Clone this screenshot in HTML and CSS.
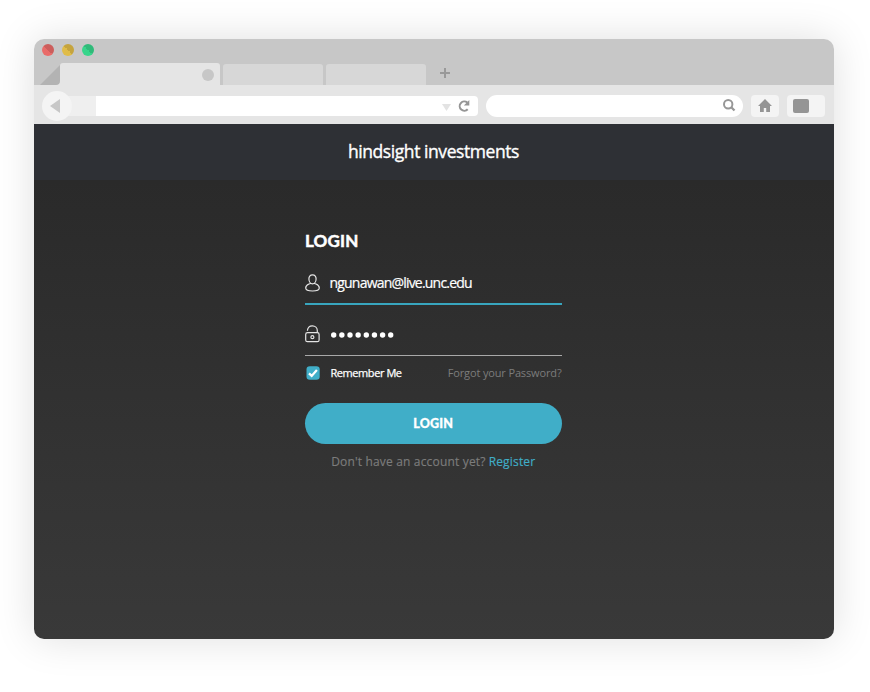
FILE: index.html
```html
<!DOCTYPE html>
<html lang="en">
<head>
<meta charset="utf-8">
<title>hindsight investments</title>
<link rel="stylesheet" href="styles.css">
</head>
<body>
<div class="window">
  <div class="titlebar">
    <div class="lights"><i class="red"></i><i class="yellow"></i><i class="green"></i></div>
    <div class="tabs">
      <svg class="fold" width="20" height="22" viewBox="0 0 20 22"><path d="M20 2V19Q20 22 17 22H0Z" fill="#b3b3b3"/><path d="M20 18V22H16Q20 22 20 18Z" fill="#e5e5e5"/></svg>
      <div class="tab active"><i class="tab-dot"></i></div>
      <div class="tab"></div>
      <div class="tab"></div>
      <svg class="plus" width="10" height="10" viewBox="0 0 10 10"><path d="M5 0V10M0 5H10" stroke="#999" stroke-width="2"/></svg>
    </div>
  </div>
  <div class="toolbar">
    <div class="back"><svg width="10" height="14" viewBox="0 0 10 14"><path d="M10 0V14L0 7Z" fill="#c7c7c7"/></svg></div>
    <div class="lead"></div>
    <div class="address">
      <svg width="9" height="7" viewBox="0 0 9 7"><path d="M0 0H9L4.500 7Z" fill="#e3e3e3"/></svg>
      <svg class="reload" width="12" height="12" viewBox="0 0 12 12"><path d="M9.300 2.600A4.600 4.600 0 1 0 9.700 9.200" fill="none" stroke="#959595" stroke-width="2"/><path d="M11.300 0V5.500H5.800Z" fill="#959595"/></svg>
    </div>
    <div class="search"><svg width="13" height="13" viewBox="0 0 13 13"><circle cx="5.200" cy="5.200" r="4.200" fill="none" stroke="#979797" stroke-width="2"/><path d="M8.300 8.300L11.500 11.500" stroke="#979797" stroke-width="2.300"/></svg></div>
    <div class="tool home"><svg width="14" height="13" viewBox="0 0 14 13"><path d="M7 0L14 7H12V13H8.200V9H5.800V13H2V7H0Z" fill="#959595"/></svg></div>
    <div class="tool menu"><i></i></div>
  </div>
  <header class="brand"><span>hindsight investments</span></header>
  <main>
    <form class="login">
      <h1>LOGIN</h1>
      <div class="field focus">
        <svg width="15" height="18" viewBox="0 0 15 18"><path d="M7.500 .8C5 .8 3.800 2.700 3.900 5C4 7.700 5.600 9.900 7.500 9.900S11 7.700 11.100 5C11.200 2.700 10 .8 7.500 .8ZM5.300 9.300C4.500 10.300 .7 10.400 .7 14C.7 16.200 3.400 17 7.500 17S14.300 16.200 14.300 14C14.300 10.400 10.500 10.300 9.700 9.300" fill="none" stroke="#e4e4e4" stroke-width="1.200"/></svg>
        <span class="email">ngunawan@live.unc.edu</span>
      </div>
      <div class="field password">
        <svg class="lock" width="15" height="18" viewBox="0 0 15 18"><rect x=".7" y="7.700" width="13.400" height="9" rx="1.800" fill="none" stroke="#e4e4e4" stroke-width="1.200"/><path d="M2.400 5.800C2.600 2.800 4.700.8 7.400.8S12.300 2.900 12.300 5.600V7.500" fill="none" stroke="#e4e4e4" stroke-width="1.200"/><circle cx="7.400" cy="12.200" r="1.500" fill="none" stroke="#e4e4e4" stroke-width="1.200"/></svg>
        <svg class="dots" width="64" height="6" viewBox="0 0 64 6" fill="#fff"><circle cx="2.700" cy="3" r="2.700"/><circle cx="10.850" cy="3" r="2.700"/><circle cx="19" cy="3" r="2.700"/><circle cx="27.150" cy="3" r="2.700"/><circle cx="35.300" cy="3" r="2.700"/><circle cx="43.450" cy="3" r="2.700"/><circle cx="51.600" cy="3" r="2.700"/><circle cx="59.700" cy="3" r="2.700"/></svg>
      </div>
      <div class="options">
        <svg class="check" width="14" height="14" viewBox="0 0 14 14"><rect x=".5" y=".3" width="13.200" height="13.400" rx="3.300" fill="#40aec8"/><path d="M3 7.300L5.700 9.900L10.900 4" fill="none" stroke="#fff" stroke-width="2.300"/></svg>
        <span class="remember">Remember Me</span>
        <span class="forgot">Forgot your Password?</span>
      </div>
      <button type="button"><span>LOGIN</span></button>
      <p class="signup"><span class="ask">Don't have an account yet?</span><a>Register</a></p>
    </form>
  </main>
</div>
</body>
</html>
```
FILE: styles.css
```css
* { box-sizing: border-box; }
html, body { height: 100%; }
body { margin: 0; padding: 39px 0 0 34px; background: #fff; font-family: "Open Sans", sans-serif; overflow: hidden; }
i, svg { display: block; flex: none; }
.window { width: 800px; height: 600px; border-radius: 10px; overflow: hidden; display: flex; flex-direction: column; box-shadow: 0 0 40px rgba(0, 0, 0, .13); }
.titlebar { height: 46px; background: #c7c7c7; padding-top: 5px; display: flex; flex-direction: column; justify-content: space-between; }
.lights { display: flex; gap: 8px; padding-left: 8px; }
.lights i { width: 12px; height: 12px; border-radius: 50%; }
.red { background: linear-gradient(45deg, #e96b69 50%, #cc5e5c 50%); }
.yellow { background: linear-gradient(45deg, #e0bc48 50%, #c5a43e 50%); }
.green { background: linear-gradient(45deg, #37d58b 50%, #30ba79 50%); }
.tabs { display: flex; align-items: flex-end; padding-left: 6px; height: 22px; }
.tab { width: 100px; height: 21px; background: #d7d7d7; border-radius: 3px 3px 0 0; margin-left: 3px; }
.tab.active { width: 160px; height: 22px; background: #e5e5e5; margin-left: 0; padding: 6px 6px 0 0; display: flex; justify-content: flex-end; }
.tab-dot { width: 12px; height: 12px; border-radius: 50%; background: #c7c7c7; }
.plus { margin: 0 0 7px 14px; }
.toolbar { height: 39px; background: #e5e5e5; display: flex; align-items: center; padding: 3px 0 0 8px; }
.back { width: 30px; height: 30px; border-radius: 50%; background: #f4f4f4; display: flex; align-items: center; padding-left: 8px; z-index: 1; }
.lead { width: 39px; height: 20px; margin-left: -15px; background: #efefef; }
.address { width: 382px; height: 20px; background: #fff; border-radius: 0 4px 4px 0; display: flex; align-items: center; justify-content: flex-end; gap: 7px; padding: 2px 8px 0 0; }
.reload { margin-top: -2px; }
.search { width: 257px; height: 22px; border-radius: 11px; background: #fff; margin-left: 8px; display: flex; justify-content: flex-end; padding: 4px 7px 0 0; }
.tool { height: 22px; border-radius: 4px; background: #f4f4f4; margin-left: 8px; display: flex; align-items: center; }
.home { width: 28px; padding: 0 0 1px 7px; }
.menu { width: 38px; padding-left: 6px; }
.menu i { width: 16px; height: 14px; border-radius: 2px; background: #959595; }
.brand { height: 56px; background: #2e3035; color: #fff; text-align: center; font-size: 17.5px; line-height: 54px; letter-spacing: -.43px; padding-right: 1px; -webkit-text-stroke: .35px #fff; }
main { flex: 1; background: linear-gradient(#2a2a2a, #393939); display: flex; justify-content: center; padding: 49px 1.500px 0 0; }
.login { width: 256.500px; color: #fff; }
h1 { margin: 0; font: bold 17px/24px Lato, sans-serif; letter-spacing: .2px; -webkit-text-stroke: .5px #fff; }
.field { height: 52px; display: flex; align-items: center; border-bottom: 2px solid #38a5be; padding-top: 9px; }
.field.password { border-bottom: 1px solid #a9a9a9; height: 51px; }
.lock { margin-top: -1px; }
.email { font-size: 14px; letter-spacing: -.8px; margin-left: 9.500px; white-space: nowrap; -webkit-text-stroke: .2px #fff; }
.dots { margin: 1px 0 0 11px; }
.options { height: 34px; display: flex; align-items: center; font-size: 11px; white-space: nowrap; padding-left: 1px; }
.options span { position: relative; top: -1px; }
.remember { margin-left: 10.500px; letter-spacing: -.43px; -webkit-text-stroke: .25px #fff; }
.forgot { color: #7c7c7c; margin-left: auto; letter-spacing: -.14px; }
button { display: block; width: 256.500px; height: 41px; margin: 13.400px 0 0; padding: 0; border: 0; border-radius: 21px; background: #40aec8; color: #fff; font: 900 12.5px/40px Lato, sans-serif; letter-spacing: .2px; -webkit-text-stroke: .3px #fff; }
.signup { margin: 8.600px 0 0; font-size: 12px; line-height: 18px; display: flex; justify-content: center; gap: 3px; color: #7c7c7c; white-space: nowrap; letter-spacing: .17px; -webkit-text-stroke: .15px currentColor; }
.signup a { color: #40aec8; }
```
